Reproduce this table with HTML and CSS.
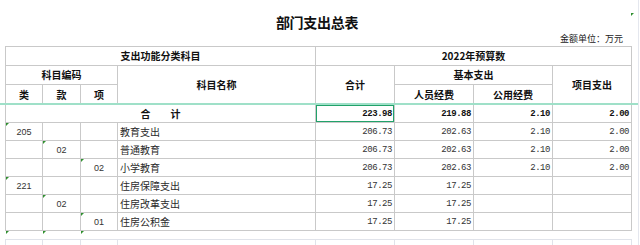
FILE: index.html
```html
<!DOCTYPE html>
<html lang="zh-CN">
<head>
<meta charset="utf-8">
<title>部门支出总表</title>
<link rel="stylesheet" href="styles.css">
</head>
<body>
<div class="sheet">
  <div class="title">部门支出总表</div>
  <div class="unit">金额单位：万元</div>
  <span class="mark-top"></span>
  <table class="grid">
    <colgroup>
      <col class="w-code"><col class="w-code2"><col class="w-code">
      <col class="w-name">
      <col class="w-num"><col class="w-num"><col class="w-num"><col class="w-num">
    </colgroup>
    <tbody>
      <tr class="h1">
        <th colspan="4">支出功能分类科目</th>
        <th colspan="4">2022年预算数</th>
      </tr>
      <tr class="h2">
        <th colspan="3">科目编码</th>
        <th rowspan="2">科目名称</th>
        <th rowspan="2">合计</th>
        <th colspan="2">基本支出</th>
        <th rowspan="2">项目支出</th>
      </tr>
      <tr class="h3">
        <th>类</th><th>款</th><th>项</th>
        <th>人员经费</th><th>公用经费</th>
      </tr>
      <tr class="total">
        <th colspan="4">合&emsp;&emsp;计</th>
        <td class="num sel">223.98</td>
        <td class="num">219.88</td>
        <td class="num">2.10</td>
        <td class="num">2.00</td>
      </tr>
      <tr>
        <td class="code t">205</td><td class="code"></td><td class="code"></td>
        <td class="name">教育支出</td>
        <td class="num">206.73</td><td class="num">202.63</td><td class="num">2.10</td><td class="num">2.00</td>
      </tr>
      <tr>
        <td class="code"></td><td class="code t">02</td><td class="code"></td>
        <td class="name">普通教育</td>
        <td class="num">206.73</td><td class="num">202.63</td><td class="num">2.10</td><td class="num">2.00</td>
      </tr>
      <tr>
        <td class="code"></td><td class="code"></td><td class="code t">02</td>
        <td class="name">小学教育</td>
        <td class="num">206.73</td><td class="num">202.63</td><td class="num">2.10</td><td class="num">2.00</td>
      </tr>
      <tr>
        <td class="code t">221</td><td class="code"></td><td class="code"></td>
        <td class="name">住房保障支出</td>
        <td class="num">17.25</td><td class="num">17.25</td><td class="num"></td><td class="num"></td>
      </tr>
      <tr>
        <td class="code"></td><td class="code t">02</td><td class="code"></td>
        <td class="name">住房改革支出</td>
        <td class="num">17.25</td><td class="num">17.25</td><td class="num"></td><td class="num"></td>
      </tr>
      <tr>
        <td class="code"></td><td class="code"></td><td class="code t">01</td>
        <td class="name">住房公积金</td>
        <td class="num">17.25</td><td class="num">17.25</td><td class="num"></td><td class="num"></td>
      </tr>
    </tbody>
  </table>
  <table class="rest">
    <colgroup>
      <col class="w-code"><col class="w-code2"><col class="w-code">
      <col class="w-name">
      <col class="w-num"><col class="w-num"><col class="w-num"><col class="w-num">
    </colgroup>
    <tbody>
      <tr class="gaprow">
        <td class="t"></td><td class="t"></td><td class="t"></td>
        <td></td><td></td><td></td><td></td><td></td>
      </tr>
      <tr class="emptyrow">
        <td></td><td></td><td></td><td></td><td></td><td></td><td></td><td></td>
      </tr>
    </tbody>
  </table>
  <div class="freeze"></div>
</div>
</body>
</html>
```

FILE: styles.css
```css
html, body {
  margin: 0;
  padding: 0;
  background: #ffffff;
}

.sheet {
  position: relative;
  width: 638px;
  height: 245px;
  overflow: hidden;
  border-right: 1px solid #e4e7ee;
  font-family: "Noto Sans CJK SC", "Liberation Sans", sans-serif;
  color: #111;
}

.title {
  height: 31px;
  box-sizing: border-box;
  padding-top: 14px;
  padding-right: 4px;
  line-height: 16px;
  font-size: 14px;
  font-weight: bold;
  text-align: center;
  letter-spacing: -0.3px;
}

.unit {
  height: 15px;
  line-height: 15px;
  font-size: 9px;
  text-align: right;
  padding-right: 15px;
  color: #222;
}

.mark-top {
  position: absolute;
  left: 631px;
  top: 13px;
  width: 0;
  height: 0;
  border-top: 3px solid #2f8f2f;
  border-right: 3px solid transparent;
}

.grid,
.rest {
  border-collapse: collapse;
  table-layout: fixed;
  margin-left: 5px;
  width: 627px;
}

.w-code { width: 37px; }
.w-code2 { width: 38px; }
.w-name { width: 198px; }
.w-num { width: 79px; }

.grid th,
.grid td {
  border: 1px solid #c9c9c9;
  padding: 0;
  font-size: 10px;
  line-height: 12px;
  overflow: hidden;
  white-space: nowrap;
}

.grid th {
  font-weight: bold;
  text-align: center;
}

.grid .h1 th { height: 18px; }
.grid .h2 th { height: 18px; }
.grid .h3 th { height: 19px; }
.grid .total th,
.grid .total td { height: 17px; }
.grid tr td { height: 17px; }

.grid td {
  position: relative;
  color: #2a2a2a;
}

.grid .code {
  text-align: center;
  font-family: "Liberation Sans", sans-serif;
  font-size: 9px;
  color: #333;
}

.grid .name {
  text-align: left;
  padding-left: 2px;
}

.grid .num {
  text-align: right;
  padding-right: 2px;
  font-family: "Liberation Mono", monospace;
  font-size: 9px;
  letter-spacing: -0.45px;
  color: #333;
}

.grid .total td.num {
  font-weight: bold;
  color: #111;
}

.t::before {
  content: "";
  position: absolute;
  left: 0;
  top: 0;
  width: 0;
  height: 0;
  border-top: 3px solid #2f8f2f;
  border-right: 3px solid transparent;
}

.sel::after {
  content: "";
  position: absolute;
  left: -1px;
  top: -1px;
  right: -1px;
  bottom: -1px;
  border: 2px solid #21a26a;
}

.sel::before {
  content: "";
  position: absolute;
  right: -3px;
  bottom: -3px;
  width: 4px;
  height: 4px;
  background: #21a26a;
  z-index: 2;
}

.rest td {
  position: relative;
  padding: 0;
}

.rest .gaprow td {
  height: 8px;
  border: none;
}

.rest .emptyrow td {
  height: 18px;
  border: 1px solid #e0e3ea;
}

.freeze {
  position: absolute;
  left: 0;
  right: 0;
  top: 103px;
  height: 2px;
  background: #9fe0c8;
}
```
